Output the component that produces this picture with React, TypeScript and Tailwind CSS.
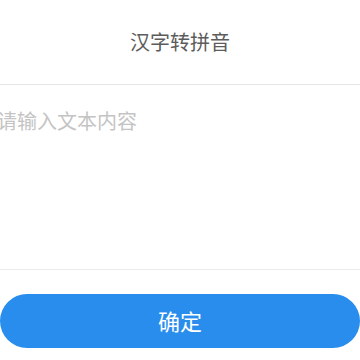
import { useState } from 'react';

export default function App() {
  const [text, setText] = useState('');

  return (
    <div
      className="w-[360px] h-[360px] bg-white overflow-hidden flex flex-col"
      style={{ fontFamily: '"Noto Sans CJK SC", "Noto Sans", sans-serif' }}
    >
      {/* Header */}
      <div className="h-[85px] shrink-0 flex items-center justify-center border-b border-[#e6e6e6]">
        <h1 className="text-[20px] leading-none text-[#5c5c5c] pb-[1px]">汉字转拼音</h1>
      </div>

      {/* Input */}
      <div className="h-[185px] shrink-0 border-b border-[#ebebeb] overflow-hidden">
        <textarea
          value={text}
          onChange={(e) => setText(e.target.value)}
          placeholder="请输入文本内容"
          className="-ml-[3px] w-[363px] h-full resize-none outline-none pt-[23px] text-[20px] leading-[26px] text-[#333] placeholder:text-[#c4c4c4]"
        />
      </div>

      {/* Action */}
      <div className="pt-[24px]">
        <button className="w-full h-[54px] rounded-full bg-[#288dec] text-white text-[22px] leading-none flex items-center justify-center pb-[3px]">
          确定
        </button>
      </div>
    </div>
  );
}
